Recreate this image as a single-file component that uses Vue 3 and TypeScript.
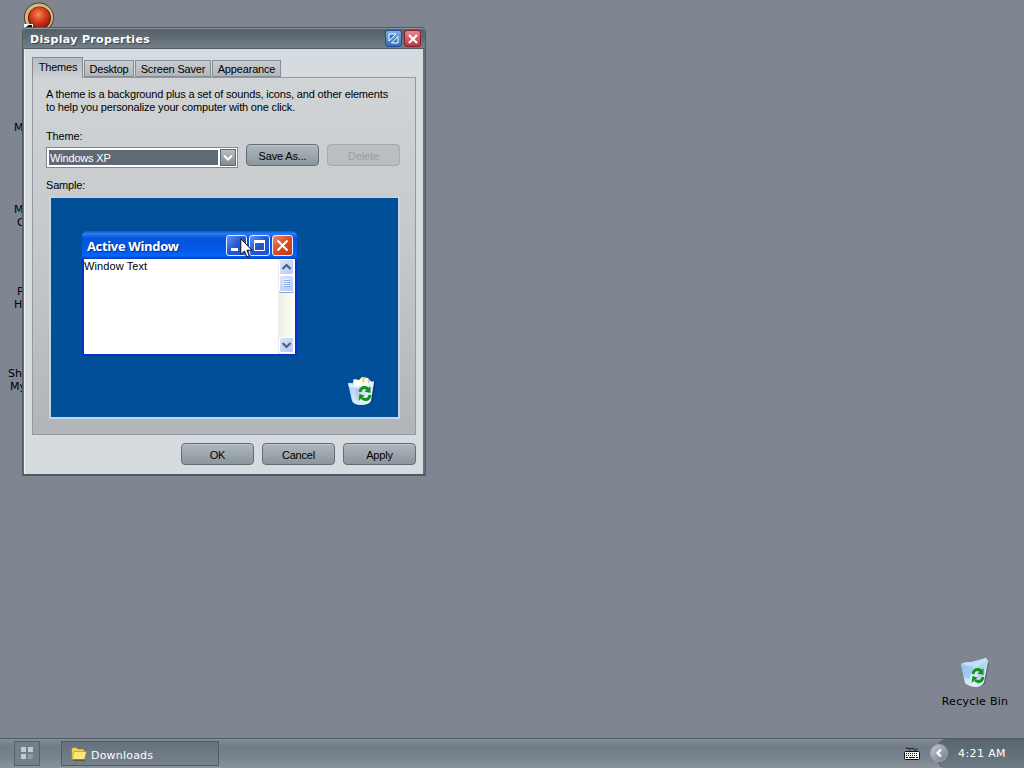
<script setup lang="ts">
import { ref } from 'vue'

interface LabelLine {
  text: string
  x: number
  y: number
}

const tabs = ['Themes', 'Desktop', 'Screen Saver', 'Appearance']
const activeTab = ref('Themes')
const theme = ref('Windows XP')

// labels peeking out from behind the dialog
const labels: LabelLine[] = [
  { text: 'M', x: 14, y: 121 },
  { text: 'M', x: 14, y: 203 },
  { text: 'C', x: 17, y: 216 },
  { text: 'P', x: 17, y: 285 },
  { text: 'H', x: 14, y: 298 },
  { text: 'Sh', x: 8, y: 367 },
  { text: 'My', x: 10, y: 380 },
]
</script>

<template>
  <div class="screen">
    <main class="desktop">
      <svg class="shortcut" width="32" height="28" viewBox="0 0 32 28">
        <defs>
          <radialGradient id="orb" cx="45%" cy="35%" r="60%">
            <stop offset="0" stop-color="#f58a60" />
            <stop offset=".5" stop-color="#dd4522" />
            <stop offset="1" stop-color="#9c230d" />
          </radialGradient>
        </defs>
        <circle cx="16" cy="17.500" r="15" fill="#5b3a20" />
        <circle cx="16" cy="17.500" r="14" fill="#d9b983" />
        <circle cx="16.500" cy="18" r="11.600" fill="#6b2411" />
        <circle cx="16.500" cy="17.500" r="10.500" fill="url(#orb)" />
        <path d="M1 24h9v4H1z" fill="#fff" />
        <path d="M3 28v-1l2-1.500V25h4v3H7v-1l-2 1z" fill="#111" />
      </svg>
      <span v-for="l in labels" :key="l.y" class="label" :style="{ left: l.x + 'px', top: l.y + 'px' }">{{ l.text }}</span>

      <div class="bin">
        <svg width="32" height="32" viewBox="0 0 32 32">
          <defs>
            <linearGradient id="glass" x1="0" y1="0" x2="1" y2="1">
              <stop offset="0" stop-color="#9fd0f5" />
              <stop offset=".45" stop-color="#c9e6f8" />
              <stop offset="1" stop-color="#f4fcff" />
            </linearGradient>
          </defs>
          <path d="M27 5l3 1-4 21-5 3z" fill="#4d5c6a" opacity=".7" />
          <path d="M2 7Q5 5 12 5L27 1l2 3-4 21q-2 5-9 5-7-1-10-4z" fill="url(#glass)" />
          <path d="M2 7q9 3 15 1L29 4 27 1q-6 3-14 4Q6 5 2 7z" fill="#c3e0f6" />
          <path d="M2 7q7 3 13 2L10 22 5 20z" fill="#8fc0ee" opacity=".7" />
          <path d="M18 9l10-5-4 20-6 5z" fill="#8fc4e4" opacity=".5" />
          <path d="M14 17q1-5 5-4.500 2 .5 3 1.500" fill="none" stroke="#12921f" stroke-width="3" />
          <path d="M24.500 11v7l-6-1.500z" fill="#12921f" />
          <path d="M24 20q-1 5-5 4.500-2-.5-3-1.500" fill="none" stroke="#12921f" stroke-width="3" />
          <path d="M12.500 26l1-7 5 1.500z" fill="#12921f" />
        </svg>
        <span>Recycle Bin</span>
      </div>

      <section class="dialog">
        <header class="dialog__title">
          <span>Display Properties</span>
          <button class="cap cap--help">
            <svg width="13" height="13" viewBox="0 0 13 13">
              <path d="M2 9V2h7z" fill="#3d78c0" stroke="#fff" />
              <path d="M4.500 11h6.500v-6.500z" fill="#3d78c0" stroke="#fff" />
            </svg>
          </button>
          <button class="cap cap--close">
            <svg width="12" height="12" viewBox="0 0 12 12"><path d="M2 2l8 8M10 2l-8 8" stroke="#fff" stroke-width="2.200" /></svg>
          </button>
        </header>

        <div class="dialog__body">
          <nav class="tabs">
            <button v-for="t in tabs" :key="t" class="tab" :class="{ 'tab--active': t === activeTab }" @click="activeTab = t">{{ t }}</button>
          </nav>

          <div class="panel">
            <p class="intro">A theme is a background plus a set of sounds, icons, and other elements<br>to help you personalize your computer with one click.</p>
            <div class="caption">Theme:</div>
            <div class="theme-row">
              <div class="combo">
                <span class="combo__value">{{ theme }}</span>
                <span class="combo__arrow">
                  <svg width="10" height="8" viewBox="0 0 10 8"><path d="M1 1.500l4 4 4-4" fill="none" stroke="#fff" stroke-width="2" /></svg>
                </span>
              </div>
              <button class="btn">Save As...</button>
              <button class="btn btn--disabled" disabled>Delete</button>
            </div>
            <div class="caption caption--sample">Sample:</div>

            <div class="sample">
              <div class="xp">
                <div class="xp__title">
                  <span>Active Window</span>
                  <i class="xp__btn"><svg width="19" height="19" viewBox="0 0 19 19"><path d="M4 12h7v3H4z" fill="#fff" /></svg></i>
                  <i class="xp__btn"><svg width="19" height="19" viewBox="0 0 19 19"><path d="M4.500 5v9.500h10V5z" fill="none" stroke="#fff" /><path d="M4 4h11v3H4z" fill="#fff" /></svg></i>
                  <i class="xp__btn xp__btn--close"><svg width="19" height="19" viewBox="0 0 19 19"><path d="M4.500 4.500l10 10M14.500 4.500l-10 10" stroke="#fff" stroke-width="2" /></svg></i>
                </div>
                <div class="xp__client">
                  <span class="xp__text">Window Text</span>
                  <div class="xp__scroll">
                    <i class="sb"><svg width="13" height="14" viewBox="0 0 13 14"><path d="M2.500 9l4-4 4 4" fill="none" stroke="#4d6185" stroke-width="2.200" /></svg></i>
                    <i class="sb sb--thumb"><svg width="13" height="16" viewBox="0 0 13 16"><path d="M3 3.500h6M3 5.500h6M3 7.500h6M3 9.500h6" stroke="#eef4fe" /><path d="M4 4.500h6M4 6.500h6M4 8.500h6M4 10.500h6" stroke="#8caee8" /></svg></i>
                    <i class="sb sb--down"><svg width="13" height="14" viewBox="0 0 13 14"><path d="M2.500 5l4 4 4-4" fill="none" stroke="#4d6185" stroke-width="2.200" /></svg></i>
                  </div>
                </div>
              </div>

              <svg class="sample__bin" width="32" height="32" viewBox="0 0 32 32">
                <path d="M27 7l3 1-4 19-5 3z" fill="#03356e" opacity=".7" />
                <path d="M2 8l26-1-3 19q-2 4-10 4-7 0-9-4z" fill="url(#glass)" />
                <path d="M7 6l1-2 5 1 3-3 6 1 2 3 3 1-7 4H8z" fill="#fffdf4" />
                <path d="M16 2l3 1-1 5-2-1z" fill="#f3d66a" />
                <path d="M22 4l3 2-3 3z" fill="#e8c6d6" />
                <path d="M2 8l9 3 7-1 10-4-1 6-8 2L3 12z" fill="#e9f7fd" opacity=".8" />
                <path d="M9 14l5-2v10l-4 3z" fill="#c3bcdb" opacity=".7" />
                <path d="M14 17q1-5 5-4.500 2 .5 3 1.500" fill="none" stroke="#12921f" stroke-width="3" />
                <path d="M24.500 11v7l-6-1.500z" fill="#12921f" />
                <path d="M24 20q-1 5-5 4.500-2-.5-3-1.500" fill="none" stroke="#12921f" stroke-width="3" />
                <path d="M12.500 26l1-7 5 1.500z" fill="#12921f" />
              </svg>
              <svg class="cursor" width="13" height="20" viewBox="0 0 13 20">
                <path d="M.8.800v15.700l3.600-3.400 2.400 5.700 2.500-1-2.400-5.600h5z" fill="#fff" stroke="#111" stroke-width="1" />
              </svg>
            </div>
          </div>

          <footer class="actions">
            <button class="btn">OK</button>
            <button class="btn">Cancel</button>
            <button class="btn">Apply</button>
          </footer>
        </div>
      </section>
    </main>

    <footer class="taskbar">
      <button class="start">
        <svg width="13" height="13" viewBox="0 0 13 13">
          <path d="M0 0h5v5H0zM7 0h5v5H7zM0 7h5v5H0z" fill="#c3cbd0" />
          <path d="M7 7h5v5H7z" fill="#8d989f" />
        </svg>
      </button>
      <button class="task">
        <svg width="16" height="14" viewBox="0 0 16 14">
          <path d="M.5 12V2l1-1.500h4L7 2h6v3" fill="#efd25a" stroke="#8b7420" stroke-width=".6" />
          <path d="M1 12.500L3 4.500H15.500L13.500 12.500z" fill="#fbe678" stroke="#a58b2b" stroke-width=".6" />
          <path d="M2 13.200h12" stroke="#4d4a2d" />
        </svg>
        <span>Downloads</span>
      </button>
      <svg class="kbd" width="16" height="13" viewBox="0 0 16 13">
        <path d="M2.500 0v1.500h3.500v2M6 1.500h4v1.500h3V1" fill="none" stroke="#22282d" />
        <rect x=".5" y="4.500" width="15" height="8" rx="1" fill="#f5f5f5" stroke="#111" />
        <path d="M2 6.500h12M2 8.500h12" stroke="#111" stroke-dasharray="1 1" />
        <path d="M2 10.500h2M5 10.500h6M12 10.500h2" stroke="#111" />
      </svg>
      <div class="tray">
        <svg class="tray__toggle" width="18" height="18" viewBox="0 0 18 18">
          <defs>
            <linearGradient id="knob" x1="0" y1="0" x2="1" y2="1">
              <stop offset="0" stop-color="#c4ccd2" />
              <stop offset="1" stop-color="#707c86" />
            </linearGradient>
          </defs>
          <circle cx="9" cy="9" r="8.500" fill="url(#knob)" stroke="#9ca7af" />
          <path d="M11 5.500L7.500 9l3.500 3.500" fill="none" stroke="#fff" stroke-width="2.200" />
        </svg>
        <span class="clock">4:21 AM</span>
      </div>
    </footer>
  </div>
</template>

<style>
body {
  overflow: hidden;
}
</style>

<style scoped>
.screen {
  width: 1024px;
  height: 768px;
  display: flex;
  flex-direction: column;
  overflow: hidden;
  background: #7f8691;
  font-family: "DejaVu Sans", sans-serif;
  font-size: 11px;
  line-height: 13px;
  color: #000;
  cursor: default;
}
.screen * { box-sizing: border-box; }
button {
  font: inherit;
  color: inherit;
  letter-spacing: inherit;
  padding: 0;
  border: 0;
}
svg { display: block; flex-shrink: 0; }

.desktop {
  position: relative;
  flex: 1;
}
.shortcut {
  position: absolute;
  left: 23px;
  top: 0;
}
.label { position: absolute; }
.bin {
  position: absolute;
  left: 935px;
  top: 657px;
  width: 80px;
  display: flex;
  flex-direction: column;
  align-items: center;
  gap: 6px;
  white-space: nowrap;
  letter-spacing: .3px;
}

/* dialog */
.dialog {
  position: absolute;
  left: 22px;
  top: 27px;
  width: 404px;
  height: 449px;
  display: flex;
  flex-direction: column;
  border: 1px solid #4f5962;
  border-width: 1px 1px 2px;
  border-radius: 5px 5px 0 0;
  background: #66707a;
  font-family: "Liberation Sans", sans-serif;
  letter-spacing: -.17px;
}
.dialog__title {
  height: 21px;
  display: flex;
  align-items: center;
  gap: 2px;
  padding: 0 4px 0 7px;
  border-radius: 4px 4px 0 0;
  border-top: 1px solid #8b959c;
  border-bottom: 1px solid #525c65;
  background: linear-gradient(#555f68, #606a73 40%, #747e87);
  color: #fff;
  font: bold 11px/13px "DejaVu Sans", sans-serif;
  letter-spacing: .34px;
  text-shadow: 1px 1px 0 #3e464d;
}
.dialog__title span {
  flex: 1;
  padding-top: 2px;
}
.cap {
  width: 17px;
  height: 17px;
  display: flex;
  align-items: center;
  justify-content: center;
  border-radius: 3px;
}
.cap--help {
  border: 1px solid #204d94;
  background: linear-gradient(#82b0e3, #336db8);
}
.cap--close {
  border: 1px solid #84202c;
  background: linear-gradient(#e68790, #bf3344);
}
.dialog__body {
  flex: 1;
  display: flex;
  flex-direction: column;
  margin: 0 2px 0 1px;
  padding: 8px 7px 9px;
  border-left: 1px solid #eef2f5;
  background: #d6dbe0;
}
.tabs {
  display: flex;
  align-items: flex-end;
  gap: 1px;
  height: 21px;
  margin-bottom: -1px;
}
.tab {
  height: 17px;
  margin-bottom: 1px;
  padding-top: 1px;
  width: 50px;
  border: 1px solid #858d93;
  background: linear-gradient(#c9cdd0, #b1b6ba);
  white-space: nowrap;
}
.tab:nth-child(3) { width: 76px; }
.tab:nth-child(4) { width: 69px; }
.tab--active {
  width: 51px;
  height: 21px;
  margin-bottom: 0;
  padding: 0 0 2px 1px;
  border-bottom: 0;
  background: linear-gradient(#b7bcc5, #cdd1d4);
  position: relative;
}
.panel {
  width: 384px;
  height: 358px;
  display: flex;
  flex-direction: column;
  padding: 10px 14px 0 13px;
  border: 1px solid #939a9f;
  background: linear-gradient(#d0d4d7, #c4c8cb 50%, #b1b5b9);
}
.intro {
  margin: 0 0 16px;
  white-space: nowrap;
}
.caption { height: 13px; }
.caption--sample { margin-top: 11px; }
.theme-row {
  display: flex;
  align-items: flex-start;
  gap: 8px;
  margin-top: 1px;
}
.combo {
  display: flex;
  width: 192px;
  height: 21px;
  margin-top: 3px;
  padding: 1px;
  gap: 2px;
  border: 1px solid #7e878d;
  background: #fff;
}
.combo__value {
  flex: 1;
  margin: 1px 0 1px 1px;
  padding-left: 1px;
  line-height: 16px;
  background: #606a74;
  color: #fff;
}
.combo__arrow {
  width: 16px;
  display: flex;
  align-items: center;
  justify-content: center;
  border: 1px solid #5f686f;
  background: linear-gradient(#b7bdc3, #828c95);
}
.btn {
  width: 73px;
  height: 22px;
  padding-top: 2px;
  border: 1px solid #626d75;
  border-radius: 4px;
  background: linear-gradient(#afb8bd, #8b969d);
  box-shadow: inset 0 1px 0 #bcc5ca;
}
.btn--disabled {
  border-color: #a3aab0;
  background: #b9bec2;
  box-shadow: none;
  color: #999fa6;
}

/* preview */
.sample {
  position: relative;
  width: 351px;
  height: 222px;
  margin: 5px 0 0 3px;
  padding: 33px 0 0 31px;
  border: 2px solid #c5d5e6;
  border-top-width: 1px;
  background: #004f98;
}
.xp {
  width: 215px;
  height: 125px;
  display: flex;
  flex-direction: column;
  padding: 0 2px 2px;
  border-radius: 5px 5px 0 0;
  background: #0831c9;
}
.xp__title {
  height: 28px;
  display: flex;
  align-items: center;
  gap: 2px;
  margin: 0 -2px;
  padding: 1px 4px 0 5px;
  border-radius: 5px 5px 0 0;
  background: linear-gradient(#0c58d6, #2b7df5 10%, #0553dc 25%, #0559e9 65%, #0565fb 88%, #023ec0);
  color: #fff;
  font: bold 13px/16px "Open Sans", "Noto Sans", sans-serif;
  text-shadow: 1px 1px 1px #0a2680;
}
.xp__title span { flex: 1; letter-spacing: -.35px; white-space: nowrap; }
.xp__btn {
  width: 21px;
  height: 21px;
  border: 1px solid #e9f0fd;
  border-radius: 3px;
  background: linear-gradient(135deg, #6594f2, #2354d2 50%, #1c52dc);
}
.xp__btn--close { background: linear-gradient(135deg, #ee8c70, #db4a23 50%, #c33a15); }
.xp__client {
  flex: 1;
  display: flex;
  justify-content: space-between;
  background: #fff;
}
.xp__text {
  padding-top: 1px;
  letter-spacing: .1px;
}
.xp__scroll {
  width: 17px;
  display: flex;
  flex-direction: column;
  padding: 0 1px 1px;
  background: linear-gradient(90deg, #eeede3, #fefefb);
}
.sb {
  width: 15px;
  height: 16px;
  border: 1px solid #fff;
  border-radius: 2px;
  background: linear-gradient(135deg, #dbe6fe, #b4c9f6);
}
.sb--thumb { height: 17px; box-shadow: 0 1px 0 #8ba5d5; }
.sb--down { margin-top: auto; }
.sample__bin {
  position: absolute;
  left: 295px;
  top: 177px;
}
.cursor {
  position: absolute;
  left: 189px;
  top: 40px;
}
.actions {
  display: flex;
  justify-content: flex-end;
  gap: 8px;
  margin-top: 8px;
}

/* taskbar */
.taskbar {
  height: 30px;
  display: flex;
  align-items: center;
  border-top: 1px solid #525c66;
  background: linear-gradient(#858f98, #727d87 25%, #77818b 60%, #8b949d);
  color: #fff;
}
.start {
  width: 26px;
  height: 25px;
  display: flex;
  align-items: center;
  justify-content: center;
  margin-left: 14px;
  border: 1px solid #55616b;
  background: #727e88;
}
.task {
  width: 158px;
  height: 25px;
  display: flex;
  align-items: center;
  gap: 4px;
  margin-left: 21px;
  padding: 1px 0 0 9px;
  border: 1px solid #4f5b66;
  background: linear-gradient(#65717c, #75818b);
  letter-spacing: .2px;
}
.task span { padding-top: 2px; }
.kbd { margin: 0 8px 0 auto; }
.tray {
  position: relative;
  align-self: stretch;
  width: 96px;
  display: flex;
  align-items: center;
  gap: 10px;
  padding-left: 2px;
}
.tray::before {
  content: "";
  position: absolute;
  inset: 0 0 0 10px;
  border-left: 1px solid #4b5762;
  border-radius: 8px 0 0 8px;
  background: linear-gradient(#59656f, #64707b 60%, #6f7a84);
}
.tray > * { position: relative; }
.tray__toggle { margin-bottom: 2px; }
.clock { letter-spacing: .4px; }
</style>
